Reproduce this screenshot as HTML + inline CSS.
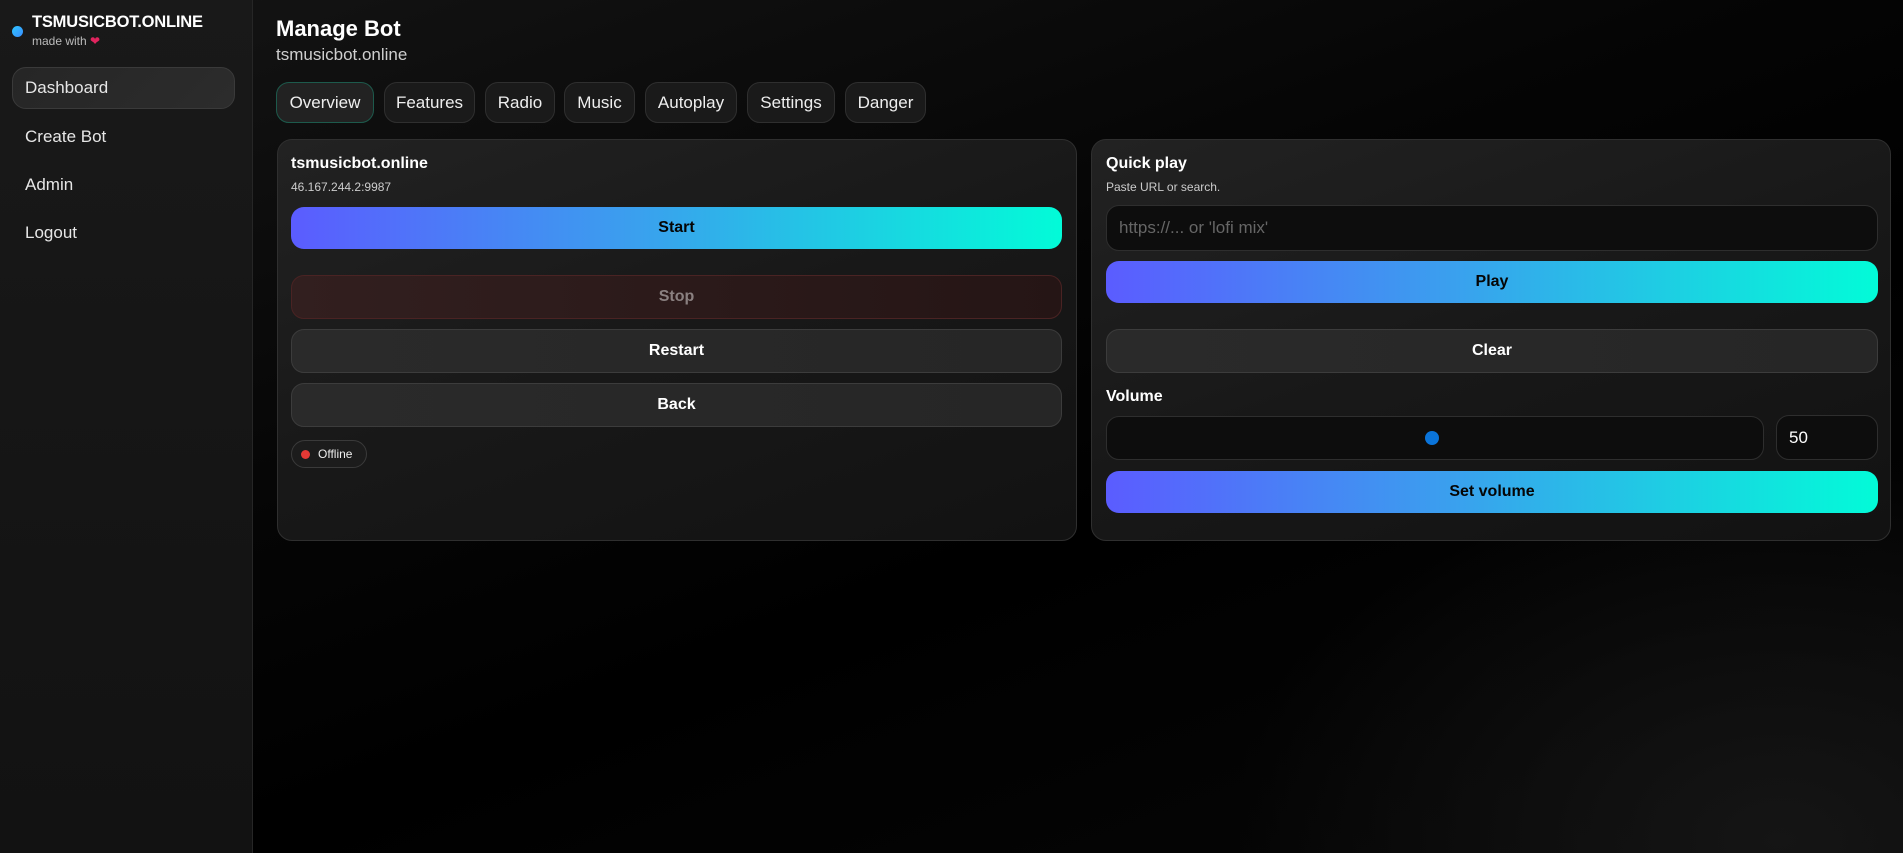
<!DOCTYPE html>
<html><head><meta charset="utf-8"><style>
*{box-sizing:border-box;margin:0;padding:0}
body{width:1903px;height:853px;overflow:hidden;font-family:"Liberation Sans",sans-serif;color:#f2f2f2;background:radial-gradient(ellipse 550px 380px at 1780px 840px,#151515,transparent),linear-gradient(160deg,#151515 0%,#050505 40%,#000 60%,#070707 100%);position:relative}
.side{position:absolute;left:0;top:0;width:253px;height:853px;background:linear-gradient(180deg,#191919,#121212);border-right:1px solid #262626}
.dot{position:absolute;left:12px;top:26px;width:11px;height:11px;border-radius:50%;background:linear-gradient(135deg,#2ec6ff,#3a8dff)}
.brand{position:absolute;left:32px;top:13px;font-size:16.5px;font-weight:bold;color:#fff;letter-spacing:-0.2px}
.made{position:absolute;left:32px;top:34px;font-size:12px;color:#bbb}
.nav{position:absolute;left:12px;width:223px;height:42px;font-size:17px;color:#e6e6e6;padding:11px 0 0 13px}
.nav.act{background:linear-gradient(135deg,#262626,#2c2c2c);border:1px solid #3a3a3a;border-radius:14px;padding-top:10px;padding-left:12px}
.h1{position:absolute;left:276px;top:16px;font-size:22px;font-weight:bold;color:#fff}
.sub{position:absolute;left:276px;top:45px;font-size:17px;color:#cfcfcf}
.tab{position:absolute;top:82px;height:41px;border:1px solid #2f2f2f;border-radius:13px;background:#1a1a1a;font-size:17px;color:#eee;text-align:center;line-height:39px}
.tab.act{border-color:#1d5a4c;background:#222}
.card{position:absolute;top:139px;height:402px;width:800px;border:1px solid #2f2f2f;border-radius:15px;background:linear-gradient(160deg,#222 0%,#181818 50%,#121212 100%)}
.t{position:absolute;font-size:16px;font-weight:bold;color:#fff}
.s{position:absolute;font-size:12px;color:#ccc}
.btn{position:absolute;border-radius:13px;text-align:center;font-size:16px;font-weight:bold}
.g{background:linear-gradient(90deg,#5b5cff,#3aa0ee 45%,#02fbd8);color:#050505}
.d{background:linear-gradient(90deg,#2a2a2a,#262626);border:1px solid #3c3c3c;color:#fff}
.r{background:linear-gradient(90deg,#321f1f,#251515);border:1px solid #4a2323;color:#8a8080}
.inp{position:absolute;border:1px solid #2e2e2e;border-radius:13px;background:#0d0d0d}
</style></head><body>
<div class="side">
<div class="dot"></div>
<div class="brand">TSMUSICBOT.ONLINE</div>
<div class="made">made with <span style="color:#e0245e">❤</span></div>
<div class="nav act" style="top:67px">Dashboard</div>
<div class="nav" style="top:116px">Create Bot</div>
<div class="nav" style="top:164px">Admin</div>
<div class="nav" style="top:212px">Logout</div>
</div>
<div class="h1">Manage Bot</div>
<div class="sub">tsmusicbot.online</div>
<div class="tab act" style="left:276px;width:98px">Overview</div>
<div class="tab" style="left:384px;width:91px">Features</div>
<div class="tab" style="left:485px;width:70px">Radio</div>
<div class="tab" style="left:564px;width:71px">Music</div>
<div class="tab" style="left:645px;width:92px">Autoplay</div>
<div class="tab" style="left:747px;width:88px">Settings</div>
<div class="tab" style="left:845px;width:81px">Danger</div>

<div class="card" style="left:277px">
<div class="t" style="left:13px;top:15px">tsmusicbot.online</div>
<div class="s" style="left:13px;top:40px">46.167.244.2:9987</div>
<div class="btn g" style="left:13px;top:67px;width:771px;height:42px;line-height:42px">Start</div>
<div class="btn r" style="left:13px;top:135px;width:771px;height:44px;line-height:42px">Stop</div>
<div class="btn d" style="left:13px;top:189px;width:771px;height:44px;line-height:42px">Restart</div>
<div class="btn d" style="left:13px;top:243px;width:771px;height:44px;line-height:42px">Back</div>
<div style="position:absolute;left:13px;top:300px;width:76px;height:28px;border:1px solid #3a3a3a;border-radius:14px;background:#1c1c1c;font-size:12px;line-height:26px;padding-left:26px;color:#eee"><span style="position:absolute;left:9px;top:9px;width:9px;height:9px;border-radius:50%;background:#e53935"></span>Offline</div>
</div>

<div class="card" style="left:1091px">
<div class="t" style="left:14px;top:15px">Quick play</div>
<div class="s" style="left:14px;top:40px">Paste URL or search.</div>
<div class="inp" style="left:14px;top:65px;width:772px;height:46px;font-size:17px;color:#666;padding:12px 0 0 12px">https://... or 'lofi mix'</div>
<div class="btn g" style="left:14px;top:121px;width:772px;height:42px;line-height:42px">Play</div>
<div class="btn d" style="left:14px;top:189px;width:772px;height:44px;line-height:42px">Clear</div>
<div class="t" style="left:14px;top:248px">Volume</div>
<div class="inp" style="left:14px;top:276px;width:658px;height:44px"><span style="position:absolute;left:318px;top:14px;width:14px;height:14px;border-radius:50%;background:#0a74da"></span></div>
<div class="inp" style="left:684px;top:275px;width:102px;height:45px;font-size:17px;color:#fff;padding:12px 0 0 12px">50</div>
<div class="btn g" style="left:14px;top:331px;width:772px;height:42px;line-height:42px">Set volume</div>
</div>
</body></html>
